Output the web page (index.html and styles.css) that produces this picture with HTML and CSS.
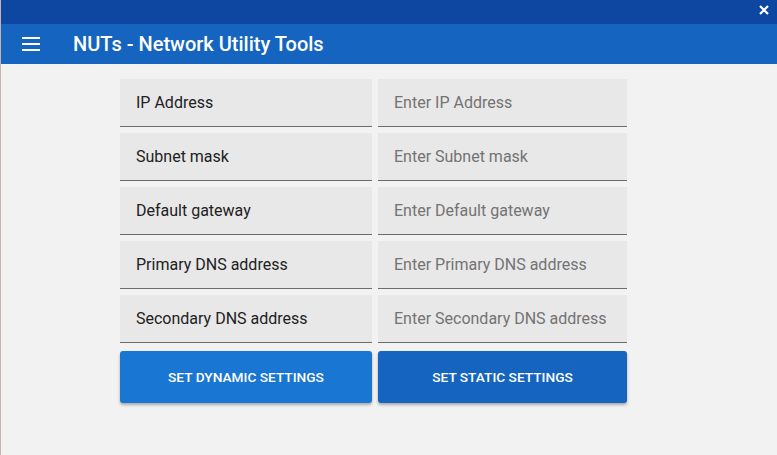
FILE: index.html
```html
<!DOCTYPE html>
<html>
<head>
<meta charset="utf-8">
<link rel="stylesheet" href="styles.css">
</head>
<body>
<div class="window">
  <div class="titlebar">
    <svg class="close" width="10" height="10" viewBox="0 0 10 10"><path d="M1 1 L9 9 M9 1 L1 9" stroke="#fff" stroke-width="2.2" fill="none"/></svg>
  </div>
  <header class="appbar">
    <div class="menu"><span></span><span></span><span></span></div>
    <h1 class="title">NUTs - Network Utility Tools</h1>
  </header>
  <main class="content">
    <div class="form">
      <div class="label">IP Address</div>
      <input class="field" type="text" placeholder="Enter IP Address">
      <div class="label">Subnet mask</div>
      <input class="field" type="text" placeholder="Enter Subnet mask">
      <div class="label">Default gateway</div>
      <input class="field" type="text" placeholder="Enter Default gateway">
      <div class="label">Primary DNS address</div>
      <input class="field" type="text" placeholder="Enter Primary DNS address">
      <div class="label">Secondary DNS address</div>
      <input class="field" type="text" placeholder="Enter Secondary DNS address">
      <button class="btn btn-dynamic">Set dynamic settings</button>
      <button class="btn btn-static">Set static settings</button>
    </div>
  </main>
</div>
</body>
</html>
```
FILE: styles.css
```css
html, body {
  margin: 0;
  padding: 0;
  height: 100%;
}
body {
  font-family: Roboto, "Noto Sans", sans-serif;
  background: #f2f2f2;
  overflow: hidden;
}
.window {
  display: flex;
  flex-direction: column;
  height: 455px;
  border-left: 1px solid #c8b2b0;
}
.titlebar {
  height: 24px;
  background: #0d47a1;
  display: flex;
  justify-content: flex-end;
  align-items: center;
}
.close {
  display: block;
  margin-right: 8px;
  margin-top: -4px;
}
.appbar {
  height: 40px;
  background: #1565c0;
  display: flex;
  align-items: center;
}
.menu {
  width: 18px;
  display: flex;
  flex-direction: column;
  gap: 4px;
  margin-left: 21px;
  margin-right: 33px;
}
.menu span {
  display: block;
  height: 2px;
  background: #fff;
}
.title {
  margin: 0;
  color: #fff;
  font-size: 20px;
  font-weight: 500;
  letter-spacing: 0;
}
.content {
  flex: 1;
  background: #f2f2f2;
  padding-top: 15px;
}
.form {
  display: grid;
  grid-template-columns: 252px 249px;
  grid-auto-rows: 47px;
  column-gap: 6px;
  row-gap: 7px;
  margin-left: 119px;
}
.label, .field {
  box-sizing: border-box;
  height: 48px;
  background: #e8e8e8;
  border: none;
  border-bottom: 1px solid #6b6b6b;
  padding: 0 16px;
  font-family: Roboto, sans-serif;
  font-size: 16px;
  color: #212121;
  display: flex;
  align-items: center;
  outline: none;
  margin: 0;
}
.field::placeholder {
  color: #737373;
}
.btn {
  height: 52px;
  margin-top: 2px;
  border: none;
  border-radius: 3px;
  color: #fff;
  font-family: Roboto, sans-serif;
  font-weight: 500;
  font-size: 13.7px;
  text-transform: uppercase;
  letter-spacing: 0;
  box-shadow: 0 2px 3px rgba(0,0,0,0.3);
}
.btn-dynamic {
  background: #1976d2;
}
.btn-static {
  background: #1565c0;
}
```
